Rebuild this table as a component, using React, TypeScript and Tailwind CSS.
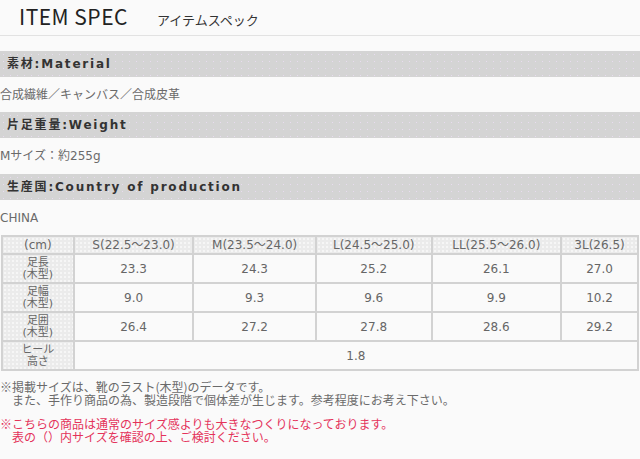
import React from "react";

const barBg =
  "bg-[#d4d4d4] bg-[radial-gradient(circle,#e8dcef_0.8px,transparent_1px)] bg-[length:7px_7px]";
const cellBg =
  "bg-[#ebebeb] bg-[radial-gradient(circle,#f6f6f6_0.8px,transparent_1px)] bg-[length:4px_4px]";

function Bar({ jp, en }: { jp: string; en: string }) {
  return (
    <div className={`h-[26px] flex items-center pl-[7px] ${barBg}`}>
      <span className="text-[12px] font-bold tracking-[1.8px] text-[#333]">
        {jp}:{en}
      </span>
    </div>
  );
}

const cols = ["(cm)", "S(22.5～23.0)", "M(23.5～24.0)", "L(24.5～25.0)", "LL(25.5～26.0)", "3L(26.5)"];
const rows: [string, string, string[]][] = [
  ["足長", "(木型)", ["23.3", "24.3", "25.2", "26.1", "27.0"]],
  ["足幅", "(木型)", ["9.0", "9.3", "9.6", "9.9", "10.2"]],
  ["足囲", "(木型)", ["26.4", "27.2", "27.8", "28.6", "29.2"]],
];
const widths = ["w-[70px]", "w-[118px]", "w-[121px]", "w-[114px]", "w-[128px]", "w-[75px]"];

export default function App() {
  return (
    <div
      className="w-[640px] h-[459px] bg-[#fafafa] text-[#6a6a6a] overflow-hidden"
      style={{ fontFamily: '"DejaVu Sans", "Noto Sans CJK JP", sans-serif' }}
    >
      <div className="h-[36px] flex items-end pb-[8px] pl-[19px] border-b border-[#e2e2e2]">
        <span
          className="text-[21px] leading-none tracking-[0.5px] text-[#222]"
          style={{ fontFamily: '"Noto Sans CJK JP", sans-serif' }}
        >
          ITEM SPEC
        </span>
        <span
          className="ml-[29px] text-[13px] leading-none text-[#333] mb-[1px]"
          style={{ fontFamily: '"Noto Sans CJK JP", sans-serif' }}
        >
          アイテムスペック
        </span>
      </div>
      <div className="h-[15px]" />
      <Bar jp="素材" en="Material" />
      <div className="h-[35px] flex items-center text-[12px]">合成繊維／キャンバス／合成皮革</div>
      <Bar jp="片足重量" en="Weight" />
      <div className="h-[36px] flex items-center text-[12px]">Mサイズ：約255g</div>
      <Bar jp="生産国" en="Country of production" />
      <div className="h-[35px] flex items-center text-[12px]">CHINA</div>
      <table className="ml-[1px] border-separate border-spacing-[2px] bg-[#d2d2d2] text-[12px] text-[#666] text-center w-[638px]">
        <tbody>
          <tr className="h-[16px]">
            {cols.map((c, i) => (
              <td key={c} className={`${widths[i]} p-0 leading-[16px] ${cellBg}`}>
                {c}
              </td>
            ))}
          </tr>
          {rows.map(([a, b, vals]) => (
            <tr key={a} className="h-[27px]">
              <td className={`p-0 text-[11px] leading-[12px] ${cellBg}`}>
                {a}
                <br />
                {b}
              </td>
              {vals.map((v, i) => (
                <td key={i} className="p-0 bg-[#fafafa]">
                  {v}
                </td>
              ))}
            </tr>
          ))}
          <tr className="h-[27px]">
            <td className={`p-0 text-[11px] leading-[12px] ${cellBg}`}>
              ヒール
              <br />
              高さ
            </td>
            <td colSpan={5} className="p-0 bg-[#fafafa]">
              1.8
            </td>
          </tr>
        </tbody>
      </table>
      <div
        className="mt-[9px] text-[12px] leading-[13px]"
        style={{ fontFamily: '"Noto Sans CJK JP", sans-serif' }}
      >
        <div>※掲載サイズは、靴のラスト(木型)のデータです。</div>
        <div className="pl-[12px]">また、手作り商品の為、製造段階で個体差が生じます。参考程度にお考え下さい。</div>
        <div className="mt-[11px] text-[#e4335a]">※こちらの商品は通常のサイズ感よりも大きなつくりになっております。</div>
        <div className="pl-[12px] text-[#e4335a]">表の（）内サイズを確認の上、ご検討ください。</div>
      </div>
    </div>
  );
}
